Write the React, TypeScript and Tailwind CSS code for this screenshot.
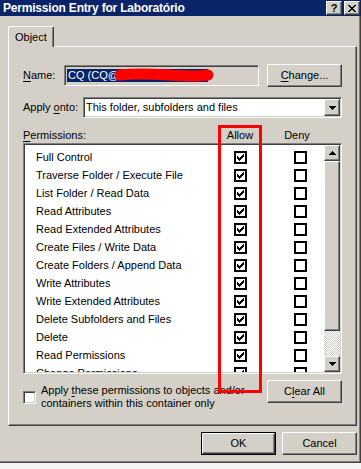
import React from 'react';

const raised =
  'border border-t-white border-l-white border-r-[#404040] border-b-[#404040] shadow-[inset_-1px_-1px_0_#808080] bg-[#D4D0C8]';
const sunken =
  'border border-t-[#808080] border-l-[#808080] border-r-white border-b-white shadow-[inset_1px_1px_0_#404040,inset_-1px_-1px_0_#D4D0C8]';

const tickRows = ['......x', '.....xx', 'x...xxx', 'xx.xxx.', 'xxxxx..', '.xxx...', '..x....'];

const Tick: React.FC = () => (
  <svg width="7" height="7" viewBox="0 0 7 7" shapeRendering="crispEdges">
    {tickRows.map((row, y) =>
      row.split('').map((c, x) => (c === 'x' ? <rect key={`${x}-${y}`} x={x} y={y} width="1" height="1" fill="#000" /> : null))
    )}
  </svg>
);

const ListCheck: React.FC<{ checked?: boolean }> = ({ checked }) => (
  <div className="flex h-[13px] w-[13px] items-center justify-center border-2 border-black bg-white">
    {checked && <Tick />}
  </div>
);

const Arrow: React.FC<{ up?: boolean }> = ({ up }) => (
  <svg width="7" height="4" viewBox="0 0 7 4" shapeRendering="crispEdges">
    <path d={up ? 'M3 0h1v1h1v1h1v1h1v1H0V3h1V2h1V1h1z' : 'M0 0h7v1H6v1H5v1H4v1H3V3H2V2H1V1H0z'} fill="#000" />
  </svg>
);

const Btn: React.FC<{ children: React.ReactNode; className?: string }> = ({ children, className = '' }) => (
  <div className={`${raised} flex h-[23px] w-[75px] items-center justify-center ${className}`}>{children}</div>
);

const permissions = [
  'Full Control',
  'Traverse Folder / Execute File',
  'List Folder / Read Data',
  'Read Attributes',
  'Read Extended Attributes',
  'Create Files / Write Data',
  'Create Folders / Append Data',
  'Write Attributes',
  'Write Extended Attributes',
  'Delete Subfolders and Files',
  'Delete',
  'Read Permissions',
  'Change Permissions',
  'Take Ownership',
];

export default function App() {
  return (
    <div className="relative flex h-[469px] w-[361px] flex-col overflow-hidden bg-[#F4F4F4] font-['Liberation_Sans',Arial,sans-serif] text-[11px] leading-[13px] text-black">
      {/* title bar */}
      <div className="flex h-[16px] shrink-0 items-center justify-between bg-[#0A246A] pl-[3px] pr-[1px]">
        <span className="text-[12px] font-bold tracking-[-0.2px] text-white">Permission Entry for Laboratório</span>
        <div className="flex gap-[2px]">
          <div className={`${raised} flex h-[14px] w-[16px] items-center justify-center text-[11px] font-bold leading-none`}>?</div>
          <div className={`${raised} flex h-[14px] w-[16px] items-center justify-center`}>
            <svg width="8" height="7" viewBox="0 0 8 7" shapeRendering="crispEdges">
              <path d="M0 0h2v1h1v1h2V1h1V0h2v1H7v1H6v1H5v1h1v1h1v1h1v1H6V6H5V5H3v1H2v1H0V6h1V5h1V4h1V3H2V2H1V1H0z" fill="#000" />
            </svg>
          </div>
        </div>
      </div>

      {/* dialog body */}
      <div className="flex h-[447px] shrink-0 flex-col border-r border-b border-r-[#404040] border-b-[#404040] bg-[#D4D0C8] shadow-[inset_-1px_-1px_0_#808080]">
        <div className="ml-[8px] flex w-[349px] flex-col pt-[10px]">
          {/* tab */}
          <div className="relative z-10 -mb-px flex h-[21px] w-[46px] items-center rounded-tl-[2px] rounded-tr-[2px] border-t border-l border-r border-t-white border-l-white border-r-[#404040] bg-[#D4D0C8] pl-[6px] shadow-[inset_-1px_0_0_#808080]">
            Object
          </div>

          {/* tab page */}
          <div className="flex h-[380px] flex-col border border-t-white border-l-white border-r-[#404040] border-b-[#404040] px-[14px] pt-[17px] shadow-[inset_-1px_-1px_0_#808080]">
            {/* name */}
            <div className="flex h-[23px] items-center">
              <span className="w-[41px]">
                <span className="underline underline-offset-2">N</span>ame:
              </span>
              <div className={`${sunken} relative flex h-[21px] w-[195px] items-center pl-[2px]`}>
                <div className="h-[13px] w-[141px] bg-[#0A246A] pl-[1px] text-white">CQ (CQ@</div>
                <svg className="absolute left-[49px] top-[1px]" width="100" height="17" viewBox="0 0 100 17">
                  <path d="M6 8 C20 6 40 7 55 8 S82 10 94 8" stroke="#FF0000" strokeWidth="11" strokeLinecap="round" fill="none" />
                </svg>
              </div>
              <Btn className="ml-auto">
                <span>
                  <span className="underline underline-offset-2">C</span>hange...
                </span>
              </Btn>
            </div>

            {/* apply onto */}
            <div className="mt-[10px] flex h-[21px] items-center">
              <span className="w-[60px]">
                Apply <span className="underline underline-offset-2">o</span>nto:
              </span>
              <div className={`${sunken} flex h-[21px] flex-1 items-center bg-white pl-[2px]`}>
                <span className="flex-1">This folder, subfolders and files</span>
                <div className={`${raised} mr-[1px] flex h-[17px] w-[16px] items-center justify-center`}>
                  <Arrow />
                </div>
              </div>
            </div>

            {/* header */}
            <div className="mt-[10px] flex h-[14px] items-center">
              <span className="w-[197px]">
                <span className="underline underline-offset-2">P</span>ermissions:
              </span>
              <span className="w-[40px] text-center">Allow</span>
              <span className="ml-[17px] w-[40px] text-center">Deny</span>
            </div>

            {/* list */}
            <div className={`${sunken} mt-[1px] flex h-[231px] overflow-hidden bg-white p-px`}>
              <div className="flex flex-1 flex-col overflow-hidden pt-[3px]">
                {permissions.map((p) => (
                  <div key={p} className="flex h-[18px] shrink-0 items-center">
                    <span className="w-[195px] whitespace-nowrap pl-[11px]">{p}</span>
                    <div className="flex w-[40px] justify-center">
                      <ListCheck checked />
                    </div>
                    <div className="ml-[20px] flex w-[40px] justify-center">
                      <ListCheck />
                    </div>
                  </div>
                ))}
              </div>
              <div className="flex w-[16px] flex-col">
                <div className={`${raised} flex h-[16px] items-center justify-center`}>
                  <Arrow up />
                </div>
                <div className={`${raised} h-[170px]`} />
                <div className="flex-1 bg-[repeating-conic-gradient(#D4D0C8_0_25%,#ffffff_0_50%)] bg-[length:2px_2px]" />
                <div className={`${raised} flex h-[16px] items-center justify-center`}>
                  <Arrow />
                </div>
              </div>
            </div>

            {/* apply + clear all */}
            <div className="mt-[6px] flex h-[30px] justify-between">
              <div className="mt-[4px] flex h-[26px] items-center gap-[5px]">
                <div className={`${sunken} h-[13px] w-[13px] bg-white`} />
                <span className="whitespace-nowrap">
                  Apply <span className="underline underline-offset-2">t</span>hese permissions to objects and/or
                  <br />
                  containers within this container only
                </span>
              </div>
              <Btn>
                <span>
                  C<span className="underline underline-offset-2">l</span>ear All
                </span>
              </Btn>
            </div>
          </div>

          {/* ok / cancel */}
          <div className="mt-[6px] flex justify-end gap-[6px]">
            <div className="h-[23px] w-[75px] border border-black">
              <div className={`${raised} flex h-full w-full items-center justify-center`}>OK</div>
            </div>
            <Btn>Cancel</Btn>
          </div>
        </div>
      </div>

      {/* red annotation */}
      <div className="pointer-events-none absolute left-[218px] top-[125px] h-[268px] w-[44px] border-[3px] border-[#FF0000]" />
    </div>
  );
}
